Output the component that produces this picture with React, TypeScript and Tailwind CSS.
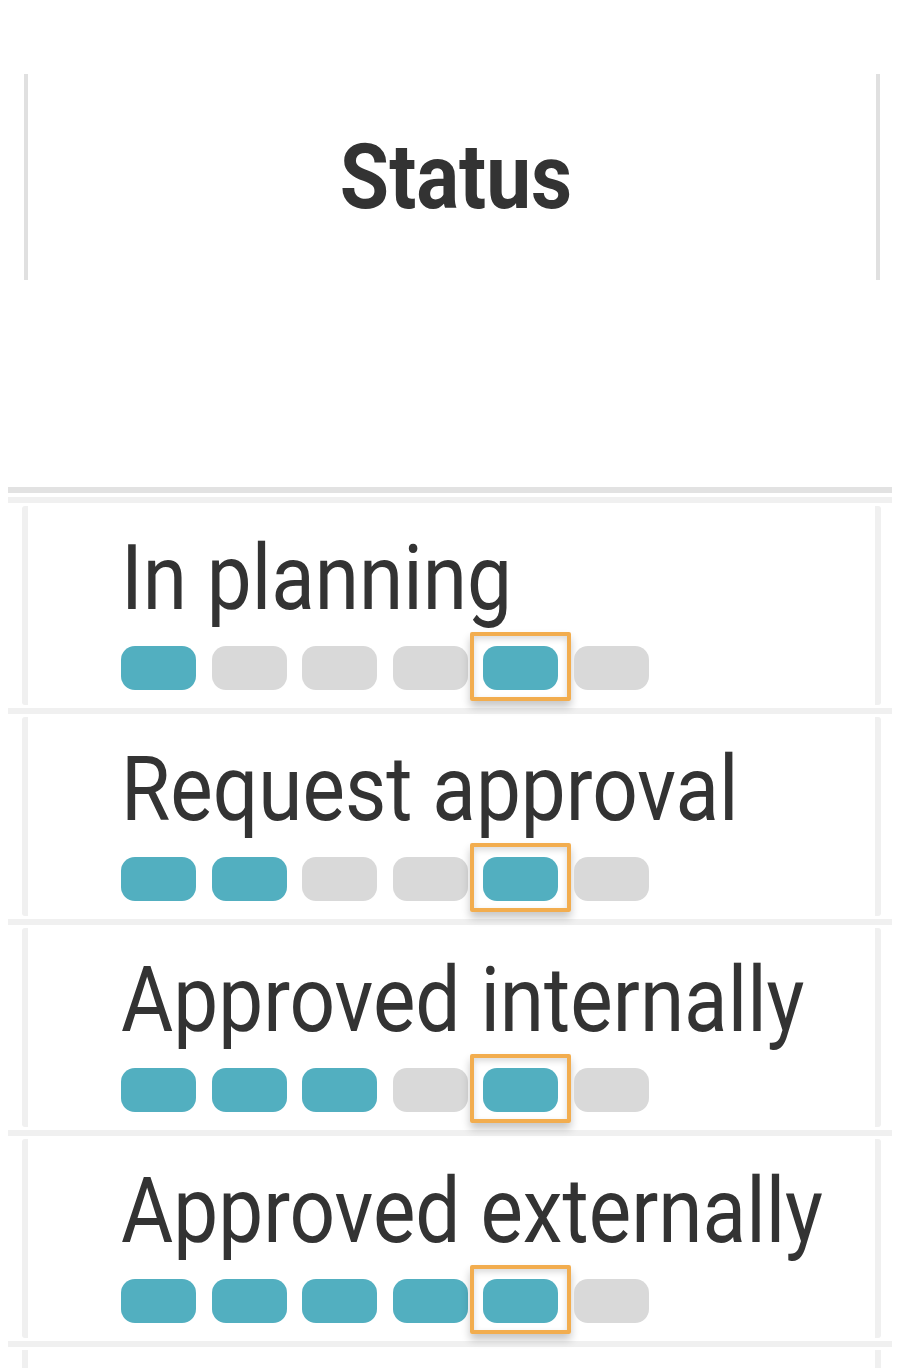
const rows = [
  { label: "In planning", filled: 1 },
  { label: "Request approval", filled: 2 },
  { label: "Approved internally", filled: 3 },
  { label: "Approved externally", filled: 4 },
];

const HIGHLIGHT = 4;

function Steps({ filled }: { filled: number }) {
  return (
    <div className="flex gap-[15.5px]">
      {Array.from({ length: 6 }).map((_, i) => {
        const on = i < filled || i === HIGHLIGHT;
        return (
          <div key={i} className="relative">
            <div
              className={`h-[44px] w-[75px] rounded-[14px] ${on ? "bg-[#52afc0]" : "bg-[#d9d9d9]"}`}
            />
            {i === HIGHLIGHT && (
              <div className="absolute -left-[13px] -right-[13px] -top-[14px] -bottom-[11px] rounded-[2px] border-[4px] border-[#f2ad4f] shadow-[0_6px_8px_rgba(0,0,0,0.22),inset_0_3px_6px_rgba(0,0,0,0.15)]" />
            )}
          </div>
        );
      })}
    </div>
  );
}

export default function App() {
  return (
    <div
      className="w-[900px] h-[1368px] overflow-hidden bg-white text-[#333]"
      style={{ fontFamily: "Roboto, 'Liberation Sans', sans-serif" }}
    >
      <div className="pl-[24px] pr-[20px] pt-[74px]">
        <div className="flex h-[206px] items-center justify-center border-x-[4px] border-[#e0e0e0] pl-[8px]">
          <span className="inline-block origin-center scale-x-[0.88] text-[91px] font-bold leading-none">
            Status
          </span>
        </div>
      </div>

      <div className="mx-[8px] mt-[207px] border-t-[6px] border-[#e2e2e2] pt-[4px]">
        {rows.map((r) => (
          <div key={r.label} className="border-t-[6px] border-[#f0f0f0]">
            <div className="ml-[14px] mr-[11px] my-[3px] h-[199px] rounded-[3px] border-x-[6px] border-[#f0f0f0] pl-[93px] pt-[27px]">
              <div className="whitespace-nowrap">
                <span className="inline-block origin-left scale-x-[0.88] text-[91px] leading-none">
                  {r.label}
                </span>
              </div>
              <div className="mt-[22px]">
                <Steps filled={r.filled} />
              </div>
            </div>
          </div>
        ))}
        <div className="border-t-[6px] border-[#f0f0f0]">
          <div className="ml-[14px] mr-[11px] mt-[3px] h-[40px] border-x-[6px] border-[#f0f0f0]" />
        </div>
      </div>
    </div>
  );
}
